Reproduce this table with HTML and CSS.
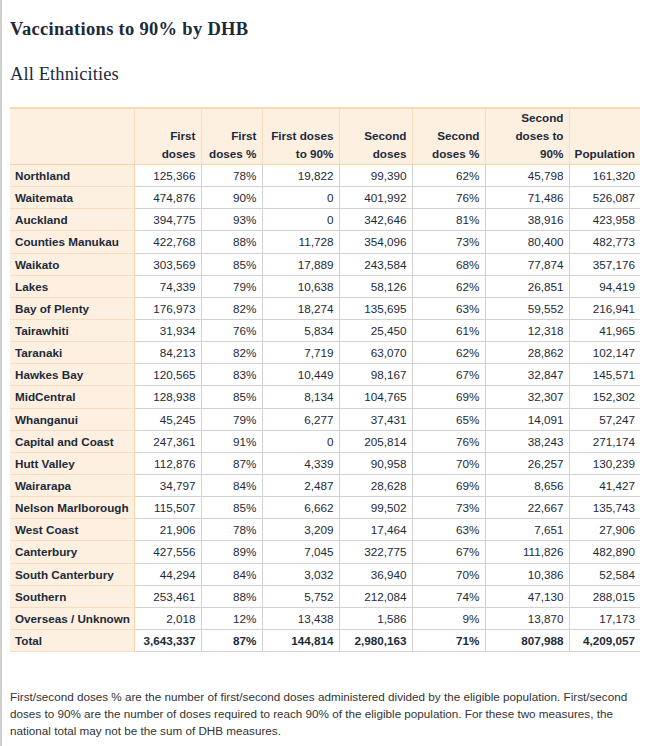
FILE: index.html
```html
<!DOCTYPE html>
<html lang="en">
<head>
<meta charset="utf-8">
<title>Vaccinations to 90% by DHB</title>
<link rel="stylesheet" href="styles.css">
</head>
<body>
<div class="page">
  <h1 class="title">Vaccinations to 90% by DHB</h1>
  <h2 class="subtitle">All Ethnicities</h2>
  <table class="vax">
    <colgroup>
      <col class="c-name"><col class="c1"><col class="c2"><col class="c3"><col class="c4"><col class="c5"><col class="c6"><col class="c7">
    </colgroup>
    <thead>
      <tr>
        <th class="name"></th>
        <th>First<br>doses</th>
        <th>First<br>doses %</th>
        <th>First doses<br>to 90%</th>
        <th>Second<br>doses</th>
        <th>Second<br>doses %</th>
        <th>Second<br>doses to<br>90%</th>
        <th>Population</th>
      </tr>
    </thead>
    <tbody>
      <tr><th class="name">Northland</th><td>125,366</td><td>78%</td><td>19,822</td><td>99,390</td><td>62%</td><td>45,798</td><td>161,320</td></tr>
      <tr><th class="name">Waitemata</th><td>474,876</td><td>90%</td><td>0</td><td>401,992</td><td>76%</td><td>71,486</td><td>526,087</td></tr>
      <tr><th class="name">Auckland</th><td>394,775</td><td>93%</td><td>0</td><td>342,646</td><td>81%</td><td>38,916</td><td>423,958</td></tr>
      <tr><th class="name">Counties Manukau</th><td>422,768</td><td>88%</td><td>11,728</td><td>354,096</td><td>73%</td><td>80,400</td><td>482,773</td></tr>
      <tr><th class="name">Waikato</th><td>303,569</td><td>85%</td><td>17,889</td><td>243,584</td><td>68%</td><td>77,874</td><td>357,176</td></tr>
      <tr><th class="name">Lakes</th><td>74,339</td><td>79%</td><td>10,638</td><td>58,126</td><td>62%</td><td>26,851</td><td>94,419</td></tr>
      <tr><th class="name">Bay of Plenty</th><td>176,973</td><td>82%</td><td>18,274</td><td>135,695</td><td>63%</td><td>59,552</td><td>216,941</td></tr>
      <tr><th class="name">Tairawhiti</th><td>31,934</td><td>76%</td><td>5,834</td><td>25,450</td><td>61%</td><td>12,318</td><td>41,965</td></tr>
      <tr><th class="name">Taranaki</th><td>84,213</td><td>82%</td><td>7,719</td><td>63,070</td><td>62%</td><td>28,862</td><td>102,147</td></tr>
      <tr><th class="name">Hawkes Bay</th><td>120,565</td><td>83%</td><td>10,449</td><td>98,167</td><td>67%</td><td>32,847</td><td>145,571</td></tr>
      <tr><th class="name">MidCentral</th><td>128,938</td><td>85%</td><td>8,134</td><td>104,765</td><td>69%</td><td>32,307</td><td>152,302</td></tr>
      <tr><th class="name">Whanganui</th><td>45,245</td><td>79%</td><td>6,277</td><td>37,431</td><td>65%</td><td>14,091</td><td>57,247</td></tr>
      <tr><th class="name">Capital and Coast</th><td>247,361</td><td>91%</td><td>0</td><td>205,814</td><td>76%</td><td>38,243</td><td>271,174</td></tr>
      <tr><th class="name">Hutt Valley</th><td>112,876</td><td>87%</td><td>4,339</td><td>90,958</td><td>70%</td><td>26,257</td><td>130,239</td></tr>
      <tr><th class="name">Wairarapa</th><td>34,797</td><td>84%</td><td>2,487</td><td>28,628</td><td>69%</td><td>8,656</td><td>41,427</td></tr>
      <tr><th class="name">Nelson Marlborough</th><td>115,507</td><td>85%</td><td>6,662</td><td>99,502</td><td>73%</td><td>22,667</td><td>135,743</td></tr>
      <tr><th class="name">West Coast</th><td>21,906</td><td>78%</td><td>3,209</td><td>17,464</td><td>63%</td><td>7,651</td><td>27,906</td></tr>
      <tr><th class="name">Canterbury</th><td>427,556</td><td>89%</td><td>7,045</td><td>322,775</td><td>67%</td><td>111,826</td><td>482,890</td></tr>
      <tr><th class="name">South Canterbury</th><td>44,294</td><td>84%</td><td>3,032</td><td>36,940</td><td>70%</td><td>10,386</td><td>52,584</td></tr>
      <tr><th class="name">Southern</th><td>253,461</td><td>88%</td><td>5,752</td><td>212,084</td><td>74%</td><td>47,130</td><td>288,015</td></tr>
      <tr><th class="name">Overseas / Unknown</th><td>2,018</td><td>12%</td><td>13,438</td><td>1,586</td><td>9%</td><td>13,870</td><td>17,173</td></tr>
      <tr class="total"><th class="name">Total</th><td>3,643,337</td><td>87%</td><td>144,814</td><td>2,980,163</td><td>71%</td><td>807,988</td><td>4,209,057</td></tr>
    </tbody>
  </table>
  <p class="note">First/second doses % are the number of first/second doses administered divided by the eligible population. First/second doses to 90% are the number of doses required to reach 90% of the eligible population. For these two measures, the national total may not be the sum of DHB measures.</p>
</div>
</body>
</html>
```
FILE: styles.css
```css
html, body {
  margin: 0;
  padding: 0;
  background: #ffffff;
}

.page {
  border-left: 2px solid #cfcfcf;
  min-height: 746px;
  box-sizing: border-box;
  padding: 18px 21px 0 8px;
  color: #1c2a3a;
}

.title {
  font-family: "Liberation Serif", "Times New Roman", serif;
  font-weight: bold;
  font-size: 18.5px;
  line-height: 22px;
  margin: 0;
  letter-spacing: 0.3px;
}

.subtitle {
  font-family: "Liberation Serif", "Times New Roman", serif;
  font-weight: normal;
  font-size: 18.5px;
  line-height: 24px;
  margin: 22px 0 21px;
  letter-spacing: 0.1px;
}

.vax {
  width: 630px;
  table-layout: fixed;
  border-collapse: collapse;
  font-family: "Liberation Sans", Arial, sans-serif;
  font-size: 11.7px;
  color: #1c2a3a;
}

.c-name { width: 124px; }
.c1 { width: 67px; }
.c2 { width: 61px; }
.c3 { width: 77px; }
.c4 { width: 73px; }
.c5 { width: 73px; }
.c6 { width: 84px; }
.c7 { width: 71px; }

.vax thead th {
  background: #fdf0e1;
  border-top: 2px solid #fbd7b0;
  border-left: 1px solid #fbdcbd;
  border-bottom: 1px solid #fbd2a8;
  text-align: right;
  vertical-align: bottom;
  font-weight: bold;
  line-height: 18px;
  padding: 0 5px 1px 5px;
  height: 54px;
  box-sizing: content-box;
}

.vax thead th.name {
  border-left: none;
}

.vax tbody th.name {
  background: #fdf0e1;
  text-align: left;
  font-weight: bold;
  padding: 2px 5px;
  line-height: 17.14px;
  border-bottom: 1px solid #fbdcbd;
  border-right: 1px solid #fbd2a8;
  white-space: nowrap;
}

.vax td {
  text-align: right;
  padding: 2px 5px 2px 4px;
  line-height: 17.14px;
  border-bottom: 1px solid #d2d2d2;
  border-left: 1px solid #d2d2d2;
  white-space: nowrap;
}

.vax tr.total td {
  font-weight: bold;
}

.note {
  font-family: "Liberation Sans", Arial, sans-serif;
  font-size: 11.7px;
  line-height: 17px;
  color: #333333;
  margin: 36px 0 0;
  width: 630px;
}
```
